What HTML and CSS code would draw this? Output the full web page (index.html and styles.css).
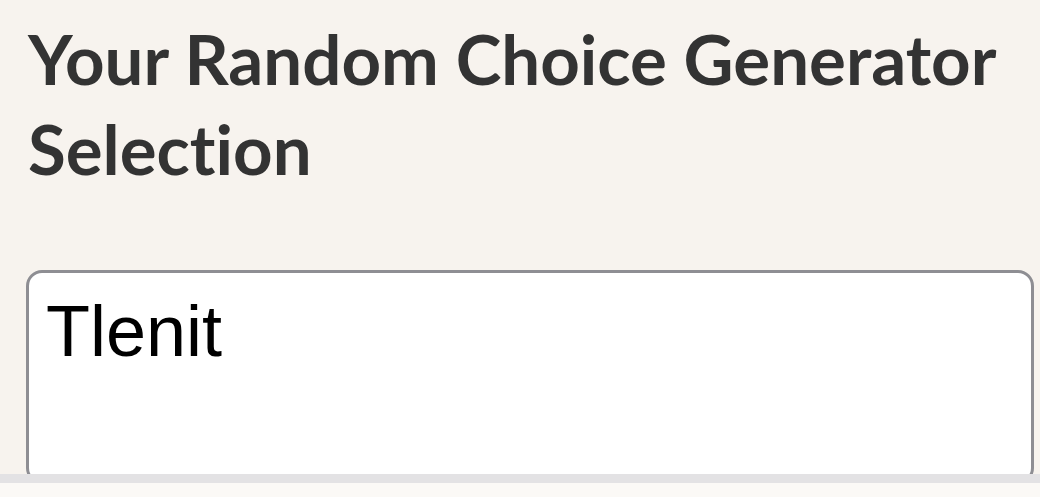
FILE: index.html
```html
<!DOCTYPE html>
<html lang="en">
<head>
  <meta charset="UTF-8" />
  <meta name="viewport" content="width=device-width, initial-scale=1.0"/>
  <title>Random Choice Generator</title>
  <link rel="stylesheet" href="styles.css">
</head>
<body>

  <h2 class="title">Your Random Choice Generator Selection</h2>

  <textarea class="choice" id="choice">Tlenit</textarea>

  <div class="bottom-bar"></div>

</body>
</html>
```

FILE: styles.css
```css
body {
  margin: 0;
  padding: 0 6px 0 26px;
  background: #f7f3ee;
  font-family: "Liberation Sans", Arial, sans-serif;
}
.title {
  font-family: Lato, "Open Sans", sans-serif;
  font-weight: 700;
  font-size: 69px;
  line-height: 90px;
  font-variant-ligatures: none;
  color: #333;
  margin: 14px 0 76px 2px;
}
.choice {
  display: block;
  box-sizing: border-box;
  width: 100%;
  height: 214px;
  padding: 17px 17px;
  border: 3px solid #8e8e93;
  border-radius: 16px;
  background: #fff;
  font-family: "Liberation Sans", Arial, sans-serif;
  font-size: 72px;
  line-height: 1.15;
  color: #000;
  resize: none;
}
.bottom-bar {
  position: fixed;
  left: 0;
  right: 0;
  bottom: 0;
  height: 14px;
  border-top: 9px solid rgba(222, 222, 224, 0.85);
  background: #fbf9f6;
}
```
